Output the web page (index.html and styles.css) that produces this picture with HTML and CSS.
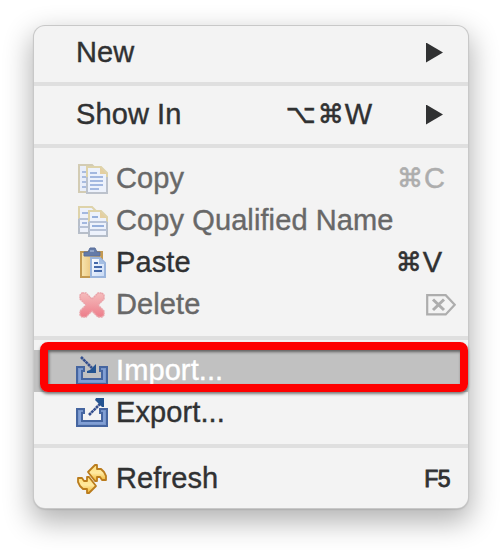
FILE: index.html
```html
<!DOCTYPE html>
<html lang="en">
<head>
<meta charset="utf-8">
<title>Context menu</title>
<link rel="stylesheet" href="styles.css">
</head>
<body>
<div class="menu" role="menu">
  <div class="item plain" role="menuitem"><span class="label">New</span><span class="arrow"></span></div>
  <div class="sep"></div>
  <div class="item plain" role="menuitem"><span class="label">Show In</span><span class="keys keys-sub"><span class="sym opt">⌥</span><span class="sym">⌘</span>W</span><span class="arrow"></span></div>
  <div class="sep sep-wide"></div>
  <div class="item disabled" role="menuitem">
    <svg class="icon" viewBox="0 0 32 32">
      <path d="M3 2h13l5 5v22H3z" fill="#e9eefa" stroke="#d3ccb4" stroke-width="2"/>
      <path d="M6 9h5M6 14h4M6 19h4M6 24h4" stroke="#aabce0" stroke-width="2"/>
      <path d="M11 4h14l6 6v20H11z" fill="#edf2fc" stroke="#ded3aa" stroke-width="2"/>
      <path d="M11 14v16h20V14" fill="none" stroke="#bcc2cc" stroke-width="2"/>
      <path d="M24 4l7 7h-7z" fill="#e4cfa0"/>
      <path d="M14 10h7M14 14h13M14 18h13M14 22h13M14 26h9" stroke="#a3b8e0" stroke-width="2"/>
    </svg><span class="label">Copy</span><span class="keys"><span class="sym">⌘</span>C</span>
  </div>
  <div class="item disabled" role="menuitem">
    <svg class="icon" viewBox="0 0 32 32">
      <path d="M3 2h13l5 5v21H3z" fill="#edf1fb" stroke="#ded3aa" stroke-width="2"/>
      <path d="M3 14v14h9" fill="none" stroke="#b7bec9" stroke-width="2"/>
      <path d="M6 8h7M6 18h5" stroke="#a3b8e0" stroke-width="2"/><path d="M3 14h9M3 22h9" stroke="#b7c2d7" stroke-width="2"/>
      <path d="M13 6h12l6 6v19H13z" fill="#edf2fc" stroke="#ded3aa" stroke-width="2"/>
      <path d="M13 17v14h18V17" fill="none" stroke="#b5bdc9" stroke-width="2"/>
      <path d="M24 6l7 7h-7z" fill="#e4cfa0"/>
      <path d="M13 17h18M13 25h18" stroke="#b7c2d7" stroke-width="2"/>
      <path d="M16 12h6M16 21h12" stroke="#96b0dd" stroke-width="2"/>
    </svg><span class="label">Copy Qualified Name</span>
  </div>
  <div class="item" role="menuitem">
    <svg class="icon" viewBox="0 0 32 32">
      <defs>
        <linearGradient id="board" x1="0" x2="1"><stop offset="0" stop-color="#f8e6b2"/><stop offset="1" stop-color="#e0a94d"/></linearGradient>
        <linearGradient id="sheet" x1="0" x2="1" y2="1"><stop offset="0" stop-color="#fff"/><stop offset="1" stop-color="#c5d8f5"/></linearGradient>
      </defs>
      <path d="M5 5h21v25H5z" fill="url(#board)" stroke="#c39a52" stroke-width="2"/>
      <path d="M8 9V5h4l2-4h5l2 4h3v4z" fill="#647ba8" stroke="#5a6f9a"/>
      <path d="M14 4h4" stroke="#91a4c8" stroke-width="2"/>
      <path d="M15 11h9l5 5v14H15z" fill="url(#sheet)" stroke="#9bb5dc" stroke-width="2"/>
      <path d="M23 11l6 6h-6z" fill="#a5bfe3"/>
      <path d="M18 16h4M18 20h8M18 24h8" stroke="#4569aa" stroke-width="2"/>
    </svg><span class="label">Paste</span><span class="keys key-v"><span class="sym">⌘</span>V</span>
  </div>
  <div class="item disabled" role="menuitem">
    <svg class="icon" viewBox="0 0 32 32">
      <defs><linearGradient id="cross" x2="0" y2="1"><stop stop-color="#f5bcbc"/><stop offset="1" stop-color="#ed7e8b"/></linearGradient></defs>
      <path d="M6 4h4l2 2 4 4 4-4 2-2h4l2 2v4l-6 6 6 6v4l-2 2h-4l-6-6-6 6H6l-2-2v-4l6-6-6-6V6z" fill="url(#cross)" stroke="#eaa3a9" stroke-width="1.4" stroke-dasharray="2 .5"/>
    </svg><span class="label">Delete</span>
    <svg class="erase" viewBox="0 0 30 22"><path d="M1.2 1.2h18.5l9 9.6-9 9.6H1.2z" fill="none" stroke="currentColor" stroke-width="2.2"/><path d="M7 5.5l11 10.5M18 5.5L7 16" stroke="currentColor" stroke-width="3"/></svg>
  </div>
  <div class="sep sep-full"></div>
  <div class="item selected" role="menuitem">
    <svg class="icon" viewBox="0 0 32 32">
      <path d="M1 12h7v4H6v8h20v-8h-2v-4h7v17H1z" fill="#7896ca" stroke="#4565a0" stroke-width="2"/>
      <path d="M4 14v12h24V14" fill="none" stroke="#819fd5" stroke-width="2"/>
      <path d="M5 2l11 11" stroke="#354f8e" stroke-width="2.6" stroke-dasharray="2.8 .5"/>
      <path d="M20 9v9h-9v-2l3-1 4-4z" fill="#245491"/>
    </svg><span class="label">Import...</span>
    <span class="callout"></span>
  </div>
  <div class="item" role="menuitem">
    <svg class="icon" viewBox="0 0 32 32">
      <path d="M1 12h7v4H6v8h20v-8h-2v-4h7v17H1z" fill="#7896ca" stroke="#4565a0" stroke-width="2"/>
      <path d="M4 14v12h24V14" fill="none" stroke="#819fd5" stroke-width="2"/>
      <path d="M13 18L24 7" stroke="#354f8e" stroke-width="2.6" stroke-dasharray="2.8 .5"/>
      <path d="M20 1h8v9h-2l-7-7z" fill="#245491"/>
    </svg><span class="label">Export...</span>
  </div>
  <div class="sep sep-full"></div>
  <div class="item" role="menuitem">
    <svg class="icon" viewBox="0 0 32 32">
      <defs><linearGradient id="gold" x2="0" y2="1"><stop stop-color="#ffe07a"/><stop offset=".5" stop-color="#ffe9a0"/><stop offset="1" stop-color="#eeb32b"/></linearGradient></defs>
      <g fill="url(#gold)" stroke="#ba7c1d" stroke-width="1.8" stroke-linejoin="round">
        <path d="M12 9l7-7h2v4h4l3 3 2 4v4h-4l-2-3h-3v4h-2z"/>
        <path d="M20 23l-7 7h-2v-4H7l-3-3-2-4v-4h4l2 3h3v-4h2z"/>
      </g>
    </svg><span class="label">Refresh</span><span class="keys fkey">F5</span>
  </div>
</div>
</body>
</html>
```
FILE: styles.css
```css
* { box-sizing: border-box; }
body {
  margin: 0;
  padding: 26px 34px;
  height: 550px;
  overflow: hidden;
  background: #fff;
  font: 29px/40px "Liberation Sans", Arial, sans-serif;
  color: #303132;
}
.menu {
  width: 434px;
  height: 482px;
  padding-top: 6px;
  background: #f3f3f3;
  border-radius: 11px;
  box-shadow: 0 0 0 1px #c8c8c8, 0 1px 2px rgba(0,0,0,.3), 0 11px 28px 3px rgba(0,0,0,.3);
}
.item {
  position: relative;
  display: flex;
  align-items: center;
  height: 42px;
  padding-left: 42px;
  -webkit-text-stroke: .4px currentColor;
}
.icon { width: 32px; height: 32px; margin-right: 8px; flex: none; }
.label { padding-bottom: 2px; letter-spacing: .1px; white-space: nowrap; }
.disabled { color: #686868; }
.disabled .keys, .erase { color: #adadad; }
.keys { display: flex; margin-left: auto; margin-right: 23px; padding-bottom: 2px; }
.key-v { margin-right: 26px; }
.keys-sub { margin-right: 54px; }
.sym {
  margin-right: 1px;
  font-family: "DejaVu Sans", sans-serif;
  font-size: 26px;
  -webkit-text-stroke-width: .6px;
}
.opt { margin-right: 2px; }
.fkey {
  font-size: 23px;
  letter-spacing: -.5px;
  margin-right: 18px;
  padding-bottom: 0;
  -webkit-text-stroke-width: .9px;
}
.arrow {
  width: 17px;
  height: 20px;
  margin-right: 25px;
  margin-bottom: 1px;
  margin-left: auto;
  background: #303132;
  clip-path: polygon(0 0, 100% 50%, 0 100%);
}
.keys-sub + .arrow { margin-left: 0; }
.erase { width: 30px; height: 22px; margin-left: auto; margin-right: 12px; }
.sep { height: 4px; margin: 8px 0; background: #dfdfdf; }
.sep-wide { margin-bottom: 10px; }
.sep-full { margin: 10px 0; }
.selected { background: #c1c1c1; color: #fff; }
.callout {
  position: absolute;
  top: -8px;
  left: 6px;
  width: 428px;
  height: 50px;
  border: 8px solid #fe0000;
  border-radius: 8px;
  box-shadow: 0 2px 3px rgba(0,0,0,.5), inset 1px 2px 3px rgba(0,0,0,.5);
}
```
